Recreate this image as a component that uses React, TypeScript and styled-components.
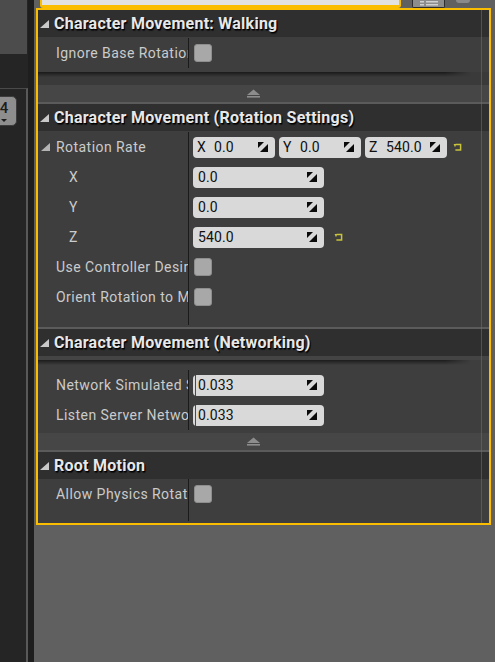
import React from 'react';
import styled, { createGlobalStyle } from 'styled-components';

const Global = createGlobalStyle`
  html, body { margin: 0; padding: 0; background: #252525; }
  body { width: 495px; height: 662px; overflow: hidden; font-family: Roboto, "Noto Sans", sans-serif; }
  #root { width: 495px; height: 662px; }
  * { box-sizing: border-box; }
`;

const Screen = styled.div`
  display: flex;
  width: 495px;
  height: 662px;
  overflow: hidden;
  background: #252525;
`;

/* ---------- left viewport strip ---------- */
const Viewport = styled.div`
  width: 28px;
  flex: none;
  display: flex;
  flex-direction: column;
  background: #252525;
`;
const ViewportTab = styled.div`
  width: 27px;
  height: 54px;
  background: #4c4c4c;
`;
const ViewportFrame = styled.div`
  margin-top: 34px;
  flex: 1;
  border-top: 1px solid #4a4a4a;
  border-right: 2px solid #595959;
  padding-top: 7px;
  overflow: hidden;
`;
const ViewButton = styled.div`
  margin-left: -9px;
  width: 26px;
  height: 30px;
  border-radius: 5px;
  background: #8e8e8e;
  border: 1px solid #3c3c3c;
  display: flex;
  flex-direction: column;
  align-items: center;
  padding-top: 4px;
  color: #1c1c1c;
  font-size: 15px;
  font-weight: 500;
  line-height: 15px;
`;
const ViewArrow = styled.div`
  width: 0;
  height: 0;
  margin-top: 3px;
  border-left: 3px solid transparent;
  border-right: 3px solid transparent;
  border-top: 3px solid #1c1c1c;
`;

const Gutter = styled.div`
  width: 6px;
  flex: none;
  background: #1e1e1e;
`;

/* ---------- right pane ---------- */
const RightPane = styled.div`
  flex: 1;
  display: flex;
  flex-direction: column;
  background: #606060;
  padding-left: 2px;
`;
const Toolbar = styled.div`
  height: 8px;
  display: flex;
  align-items: stretch;
`;
const SearchBox = styled.div`
  margin-left: 4px;
  width: 361px;
  border: 2px solid #fbbd00;
  border-top: none;
  border-bottom-width: 3px;
  background: #e2e2e2;
  border-radius: 0 0 3px 3px;
`;
const ViewOptions = styled.div`
  margin-left: 11px;
  width: 33px;
  background: #8c8c8c;
  border: 1px solid #2e2e2e;
  border-top: none;
  border-radius: 0 0 2px 2px;
  display: flex;
  justify-content: center;
  align-items: flex-start;
`;
const GearStub = styled.div`
  margin-left: 11px;
  width: 14px;
  height: 3px;
  background: #8a8a8a;
  border-radius: 0 0 7px 7px;
`;

const Details = styled.div`
  position: relative;
  width: 455px;
  height: 517px;
  border: 2px solid #fbbd00;
  background: #3e3e3e;
  display: flex;
  flex-direction: column;
  overflow: hidden;
`;
const ScrollTrackLine = styled.div`
  position: absolute;
  top: 0;
  bottom: 0;
  left: 443px;
  width: 1px;
  background: rgba(110, 110, 110, 0.55);
`;

/* ---------- categories ---------- */
const Header = styled.div`
  height: 27px;
  flex: none;
  background: #2f2f2f;
  display: flex;
  align-items: center;
  padding-left: 2px;
  gap: 5px;
  color: #e8e8e8;
  font-size: 16px;
  font-weight: 700;
  letter-spacing: 0.25px;
  text-shadow: 1px 1px 0 #000, 1px 2px 1px rgba(0,0,0,0.6);
  white-space: nowrap;
`;
const Separator = styled.div`
  height: 2px;
  flex: none;
  background: #5b5b5b;
`;
const RowsArea = styled.div<{ $top: number; $bottom: number }>`
  flex: none;
  background: #3e3e3e;
  padding-top: ${p => p.$top}px;
  padding-bottom: ${p => p.$bottom}px;
  display: flex;
  flex-direction: column;
`;
const Row = styled.div<{ $h?: number }>`
  height: ${p => p.$h ?? 30}px;
  display: grid;
  grid-template-columns: 151px 1fr;
`;
const LabelCell = styled.div<{ $indent: number }>`
  border-right: 1px solid #1a1a1a;
  padding-left: ${p => p.$indent}px;
  display: flex;
  align-items: center;
  gap: 6px;
  overflow: hidden;
  white-space: nowrap;
  color: #cbcbcb;
  font-size: 14px;
  letter-spacing: 0.45px;
`;
const ValueCell = styled.div`
  display: flex;
  align-items: center;
  padding-left: 4px;
`;
const AdvancedGap = styled.div<{ $h: number; $lead?: number }>`
  height: ${p => p.$h}px;
  flex: none;
  background: ${p => (p.$lead ? '#444444' : '#3a3a3a')};
  display: flex;
  flex-direction: column;
`;
const AdvancedBody = styled.div<{ $lead?: number }>`
  flex: 1;
  margin-top: ${p => p.$lead ?? 0}px;
  background: ${p => (p.$lead ? '#3e3e3e' : '#3a3a3a')};
`;
const Shadow = styled.div`
  height: 5px;
  margin-right: 18px;
  background: linear-gradient(to bottom, rgba(0,0,0,0.55), rgba(0,0,0,0));
  -webkit-mask-image: linear-gradient(to right, #000 94%, transparent);
  mask-image: linear-gradient(to right, #000 94%, transparent);
`;
const CollapseBar = styled.div`
  height: 17px;
  flex: none;
  background: #464646;
  display: flex;
  justify-content: center;
  align-items: center;
  padding-right: 20px;
`;

/* ---------- widgets ---------- */
const SpinBox = styled.div<{ $w: number; $slider?: boolean }>`
  width: ${p => p.$w}px;
  height: 21px;
  flex: none;
  border-radius: 4px;
  background: ${p =>
    p.$slider
      ? 'linear-gradient(to right, #d9d9d9 0 2px, #4a4a4a 2px 3px, #d9d9d9 3px)'
      : '#d9d9d9'};
  display: flex;
  align-items: center;
  padding: 0 7px 0 5px;
  color: #101010;
  font-size: 14px;
  letter-spacing: 0.1px;
`;
const Axis = styled.span`
  width: 17px;
  flex: none;
  margin-left: -1px;
`;
const SpinValue = styled.span`
  flex: 1;
`;
const VectorGroup = styled.div`
  display: flex;
  gap: 4px;
  align-items: center;
`;
const CheckBox = styled.div`
  width: 18px;
  height: 18px;
  margin-left: 1px;
  border-radius: 3px;
  background: #a8a8a8;
  border: 1px solid #8e8e8e;
`;
const ResetWrap = styled.span<{ $gap: number }>`
  margin-left: ${p => p.$gap}px;
  display: flex;
`;

const Expander = ({ color }: { color: string }) => (
  <svg width="9" height="8" viewBox="0 0 9 8" style={{ flex: 'none' }}>
    <polygon points="9,0 9,8 0,8" fill={color} />
  </svg>
);

const SpinIcon = () => (
  <svg width="10" height="10" viewBox="0 0 10 10" style={{ flex: 'none' }}>
    <polygon points="0,0 6,0 0,6" fill="#0a0a0a" />
    <polygon points="10,2 10,10 2,10" fill="#0a0a0a" />
  </svg>
);

const ResetIcon = () => (
  <svg width="9" height="8" viewBox="0 0 9 8">
    <path d="M2.6 1.6 H7.6 V6.9 H2.4" fill="none" stroke="#c9c43a" strokeWidth="1.5" />
    <polygon points="0.6,1 3.4,1 2,4.2" fill="#c9c43a" />
  </svg>
);

const EjectIcon = () => (
  <svg width="13" height="9" viewBox="0 0 13 9">
    <polygon points="0,6 6.5,0.5 13,6" fill="#8d8d8d" />
    <rect x="0" y="7" width="13" height="1.6" fill="#8d8d8d" />
  </svg>
);

const ListIcon = () => (
  <svg width="18" height="6" viewBox="0 0 18 6">
    <rect x="0" y="1" width="4" height="1.5" fill="#d0d0d0" />
    <rect x="6" y="1" width="12" height="1.5" fill="#d0d0d0" />
    <rect x="0" y="4" width="4" height="1.5" fill="#d0d0d0" />
    <rect x="6" y="4" width="12" height="1.5" fill="#d0d0d0" />
  </svg>
);

type Prop = {
  label: string;
  indent: number;
  expander?: boolean;
  value: React.ReactNode;
};

const PropRow = ({ label, indent, expander, value }: Prop) => (
  <Row>
    <LabelCell $indent={indent}>
      {expander && <Expander color="#b4b4b4" />}
      <span>{label}</span>
    </LabelCell>
    <ValueCell>{value}</ValueCell>
  </Row>
);

const Filler = ({ h }: { h: number }) => (
  <Row $h={h}>
    <LabelCell $indent={0} />
    <div />
  </Row>
);

const Spin = ({ w, v, axis, slider }: { w: number; v: string; axis?: string; slider?: boolean }) => (
  <SpinBox $w={w} $slider={slider}>
    {axis && <Axis>{axis}</Axis>}
    <SpinValue>{v}</SpinValue>
    <SpinIcon />
  </SpinBox>
);

const Check = () => <CheckBox />;

const CategoryHeader = ({ title }: { title: string }) => (
  <Header>
    <Expander color="#c9c9c9" />
    <span>{title}</span>
  </Header>
);

export default function App() {
  return (
    <>
      <Global />
      <Screen>
        <Viewport>
          <ViewportTab />
          <ViewportFrame>
            <ViewButton>
              4
              <ViewArrow />
            </ViewButton>
          </ViewportFrame>
        </Viewport>
        <Gutter />
        <RightPane>
          <Toolbar>
            <SearchBox />
            <ViewOptions>
              <ListIcon />
            </ViewOptions>
            <GearStub />
          </Toolbar>
          <Details>
            <CategoryHeader title="Character Movement: Walking" />
            <RowsArea $top={1} $bottom={4}>
              <PropRow label="Ignore Base Rotation" indent={18} value={<Check />} />
            </RowsArea>
            <AdvancedGap $h={13}>
              <Shadow />
              <AdvancedBody />
            </AdvancedGap>
            <CollapseBar>
              <EjectIcon />
            </CollapseBar>
            <Separator />

            <CategoryHeader title="Character Movement (Rotation Settings)" />
            <RowsArea $top={1} $bottom={2}>
              <PropRow
                label="Rotation Rate"
                indent={3}
                expander
                value={
                  <VectorGroup>
                    <Spin w={82} axis="X" v="0.0" />
                    <Spin w={82} axis="Y" v="0.0" />
                    <Spin w={82} axis="Z" v="540.0" />
                    <ResetWrap $gap={2}>
                      <ResetIcon />
                    </ResetWrap>
                  </VectorGroup>
                }
              />
              <PropRow label="X" indent={31} value={<Spin w={131} v="0.0" />} />
              <PropRow label="Y" indent={31} value={<Spin w={131} v="0.0" />} />
              <PropRow
                label="Z"
                indent={31}
                value={
                  <>
                    <Spin w={131} v="540.0" />
                    <ResetWrap $gap={10}>
                      <ResetIcon />
                    </ResetWrap>
                  </>
                }
              />
              <PropRow label="Use Controller Desired Rotation" indent={18} value={<Check />} />
              <PropRow label="Orient Rotation to Movement" indent={18} value={<Check />} />
              <Filler h={13} />
            </RowsArea>
            <Separator />

            <CategoryHeader title="Character Movement (Networking)" />
            <AdvancedGap $h={14} $lead={4}>
              <AdvancedBody $lead={4}>
                <Shadow />
              </AdvancedBody>
            </AdvancedGap>
            <RowsArea $top={0} $bottom={3}>
              <PropRow
                label="Network Simulated Smooth Location Time"
                indent={18}
                value={<Spin w={131} v="0.033" slider />}
              />
              <PropRow
                label="Listen Server Network Simulated Smooth Location Time"
                indent={18}
                value={<Spin w={131} v="0.033" slider />}
              />
            </RowsArea>
            <CollapseBar>
              <EjectIcon />
            </CollapseBar>
            <Separator />

            <CategoryHeader title="Root Motion" />
            <RowsArea $top={0} $bottom={2}>
              <PropRow label="Allow Physics Rotation During Anim Root Motion" indent={18} value={<Check />} />
              <Filler h={12} />
            </RowsArea>
            <ScrollTrackLine />
          </Details>
        </RightPane>
      </Screen>
    </>
  );
}
